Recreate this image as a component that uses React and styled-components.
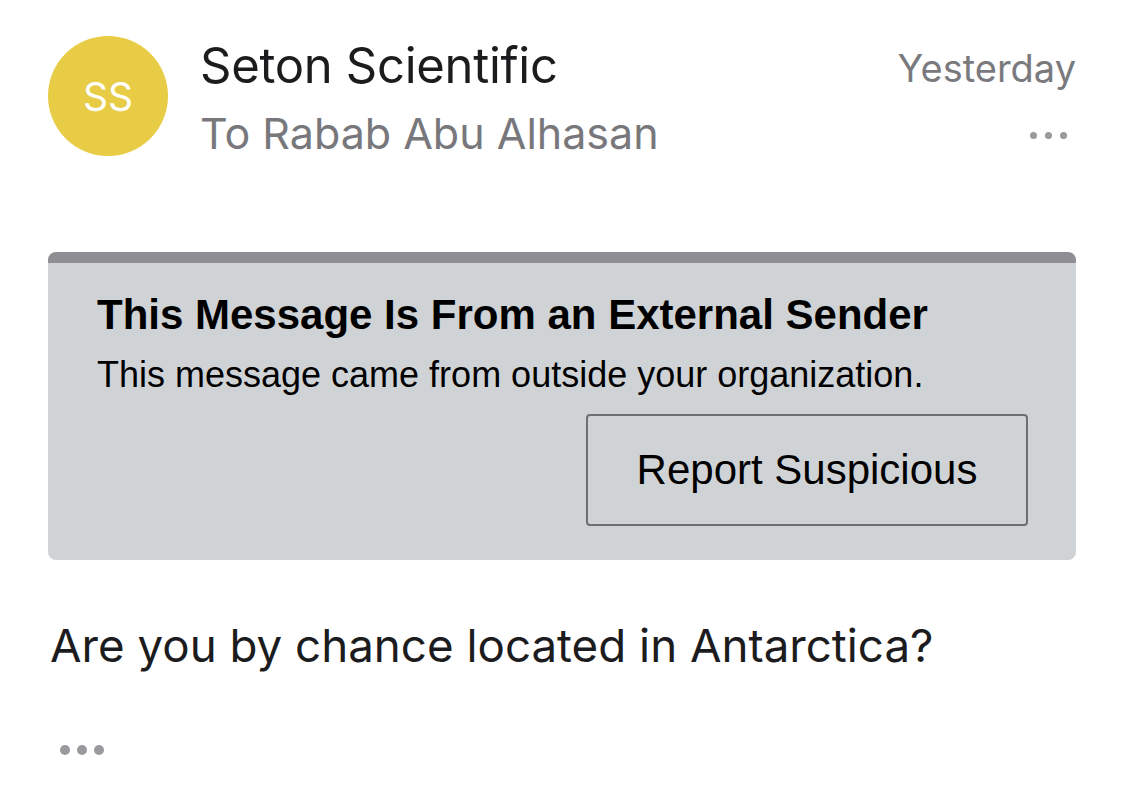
import React from "react";
import styled, { createGlobalStyle } from "styled-components";

const GlobalStyle = createGlobalStyle`
  html, body {
    margin: 0;
    padding: 0;
    background: #ffffff;
  }
  body {
    font-family: Inter, "Noto Sans", sans-serif;
  }
`;

export default function App() {
  return (
    <>
      <GlobalStyle />
      <Page>
        <Header>
          <Avatar>SS</Avatar>
          <Who>
            <Sender>Seton Scientific</Sender>
            <Recipient>To Rabab Abu Alhasan</Recipient>
          </Who>
          <Meta>
            <When>Yesterday</When>
            <Dots size={7} gap={8} aria-label="More">
              <Dot />
              <Dot />
              <Dot />
            </Dots>
          </Meta>
        </Header>

        <Banner>
          <BannerTitle>This Message Is From an External Sender</BannerTitle>
          <BannerText>This message came from outside your organization.</BannerText>
          <BannerActions>
            <ReportButton>Report Suspicious</ReportButton>
          </BannerActions>
        </Banner>

        <Body>Are you by chance located in Antarctica?</Body>

        <Dots size={10} gap={7} indent={12}>
          <Dot />
          <Dot />
          <Dot />
        </Dots>
      </Page>
    </>
  );
}

const Page = styled.div`
  width: 1125px;
  height: 810px;
  box-sizing: border-box;
  padding: 36px 49px 0 48px;
  overflow: hidden;
`;

const Header = styled.div`
  display: flex;
  align-items: flex-start;
`;

const Avatar = styled.div`
  width: 120px;
  height: 120px;
  border-radius: 50%;
  background: #e8cc46;
  color: #ffffff;
  display: flex;
  align-items: center;
  justify-content: center;
  font-size: 39px;
  font-weight: 400;
  flex-shrink: 0;
`;

const Who = styled.div`
  flex: 1;
  margin-left: 32px;
  display: flex;
  flex-direction: column;
`;

const Sender = styled.div`
  font-size: 49px;
  line-height: 60px;
  color: #1c1c1e;
  letter-spacing: -0.3px;
`;

const Recipient = styled.div`
  font-size: 43px;
  line-height: 60px;
  color: #78787c;
  margin-top: 7px;
`;

const Meta = styled.div`
  display: flex;
  flex-direction: column;
  align-items: flex-end;
`;

const When = styled.div`
  font-size: 38px;
  line-height: 64px;
  color: #7a7a7e;
`;

const Dots = styled.div`
  display: flex;
  gap: ${({ gap }) => gap}px;
  padding-left: ${({ indent }) => indent || 0}px;
  padding-right: ${({ indent }) => (indent ? 0 : 9)}px;
  margin-top: ${({ indent }) => (indent ? 69 : 32)}px;

  & > span {
    width: ${({ size }) => size}px;
    height: ${({ size }) => size}px;
  }
`;

const Dot = styled.span`
  display: block;
  border-radius: 50%;
  background: #9a9a9e;
`;

const Banner = styled.div`
  margin-top: 89px;
  background: #d0d3d6;
  border-top: 11px solid #8e8e93;
  border-radius: 8px;
  padding: 28px 48px 34px 49px;
`;

const BannerTitle = styled.div`
  font-family: "Liberation Sans", Arial, sans-serif;
  font-weight: 700;
  font-size: 42px;
  line-height: 48px;
  color: #000000;
`;

const BannerText = styled.div`
  font-family: "Liberation Sans", Arial, sans-serif;
  font-size: 36px;
  line-height: 42px;
  color: #000000;
  margin-top: 15px;
`;

const BannerActions = styled.div`
  display: flex;
  justify-content: flex-end;
  margin-top: 18px;
`;

const ReportButton = styled.button`
  width: 442px;
  height: 112px;
  box-sizing: border-box;
  background: transparent;
  border: 2px solid #6d6e70;
  border-radius: 4px;
  font-family: "Liberation Sans", Arial, sans-serif;
  font-size: 42px;
  color: #000000;
  padding: 0;
`;

const Body = styled.div`
  margin-top: 56px;
  margin-left: 2px;
  font-size: 45.7px;
  line-height: 60px;
  color: #1c1c1e;
`;
